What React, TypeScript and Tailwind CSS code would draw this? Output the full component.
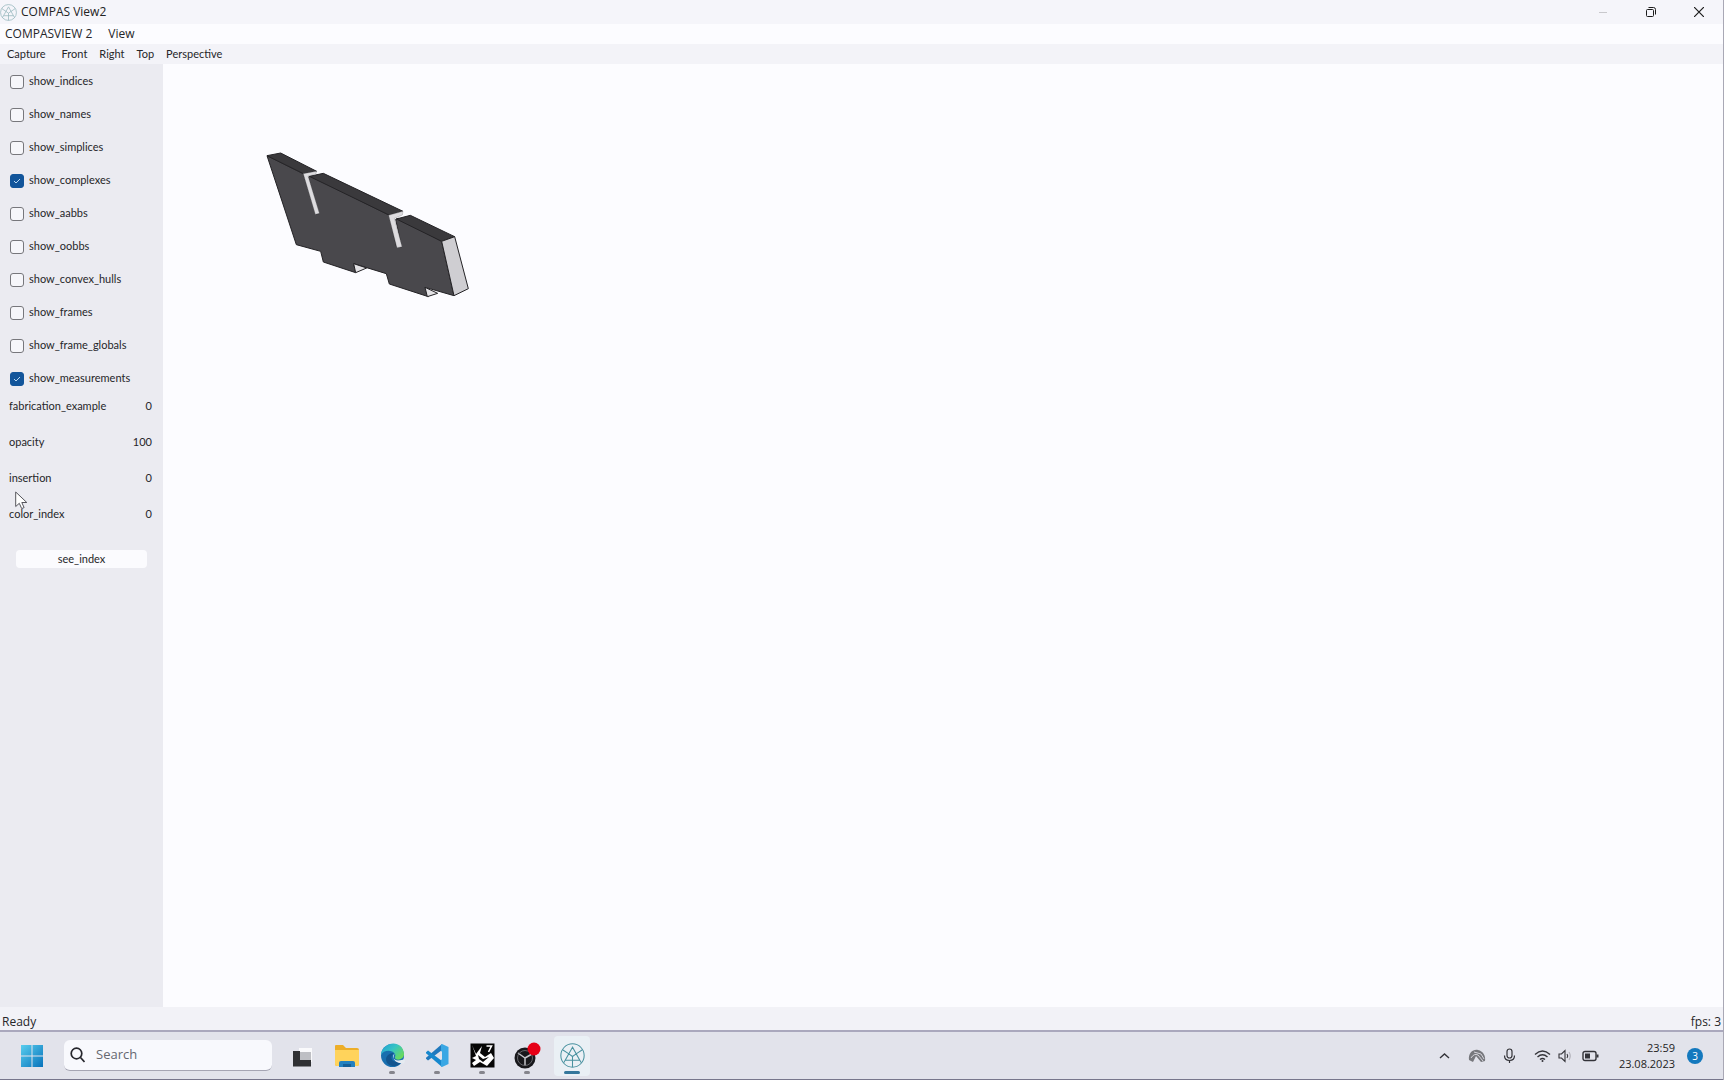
import React, { useState } from "react";

const toggles = [
  { name: "show_indices", on: false },
  { name: "show_names", on: false },
  { name: "show_simplices", on: false },
  { name: "show_complexes", on: true },
  { name: "show_aabbs", on: false },
  { name: "show_oobbs", on: false },
  { name: "show_convex_hulls", on: false },
  { name: "show_frames", on: false },
  { name: "show_frame_globals", on: false },
  { name: "show_measurements", on: true },
];

const values = [
  { name: "fabrication_example", value: 0 },
  { name: "opacity", value: 100 },
  { name: "insertion", value: 0 },
  { name: "color_index", value: 0 },
];

function CompasLogo({ className }: { className: string }) {
  return (
    <svg viewBox="0 0 24 24" className={className} fill="none" stroke="currentColor" aria-hidden="true">
      <circle cx="12" cy="12" r="11.2" />
      <path d="M12 4 5 16.500h14zM2.500 6.500l6 4M21.500 6.500l-6 4M5 16.500l-1.500 2.500M19 16.500l1.500 2.500M8.500 10.500 12 13l3.500-2.500M12 13v10" />
    </svg>
  );
}

function TitleBar() {
  return (
    <header className="flex h-6 shrink-0 items-center justify-between bg-[#f5f5fa]">
      <div className="flex items-center gap-1">
        <CompasLogo className="size-[17px] text-[#8fb3b8]" />
        <h1 className="text-xs text-[#222]">COMPAS View2</h1>
      </div>
      <div className="flex h-full items-center text-[#1c1c1c]">
        <button aria-label="Minimize" className="flex h-full w-12 items-center justify-center text-[#c8c8cc]">
          <svg width="10" height="10" stroke="currentColor"><path d="M1 5.500h8" /></svg>
        </button>
        <button aria-label="Restore" className="flex h-full w-12 items-center justify-center">
          <svg width="10" height="10" fill="none" stroke="currentColor">
            <rect x=".5" y="2.500" width="7" height="7" rx="1" />
            <path d="M2.500 .5h5q2 0 2 2v5" />
          </svg>
        </button>
        <button aria-label="Close" className="flex h-full w-12 items-center justify-center">
          <svg width="10" height="10" stroke="currentColor" strokeWidth="1.200"><path d="m0 0 10 10M10 0 0 10" /></svg>
        </button>
      </div>
    </header>
  );
}

function Sidebar() {
  const [state, setState] = useState(toggles);
  return (
    <aside className="relative w-[163px] shrink-0 bg-[#ebebf1] font-['Lato','Open_Sans',sans-serif] text-[11px]">
      <div className="pt-px">
        {state.map((t, i) => (
          <label key={t.name} className="flex h-[33px] items-center gap-[5px] pl-[10px]">
            <span className="grid size-[14px] place-items-center">
              <input
                type="checkbox"
                checked={t.on}
                onChange={() => setState(state.map((s, j) => (j === i ? { ...s, on: !s.on } : s)))}
                className="col-start-1 row-start-1 size-[14px] appearance-none rounded-[3px] border border-[#77777c] bg-[#f6f6fa] checked:border-[#12559b] checked:bg-[#12559b]"
              />
              {t.on && (
                <svg width="8" height="8" fill="none" stroke="#b9d8f2" className="pointer-events-none col-start-1 row-start-1">
                  <path d="m1 4 2 2 4-4" />
                </svg>
              )}
            </span>
            {t.name}
          </label>
        ))}
      </div>
      <dl>
        {values.map((v) => (
          <div key={v.name} className="flex h-9 items-start justify-between pt-[3px] pr-[11px] pl-[9px] leading-4">
            <dt>{v.name}</dt>
            <dd>{v.value}</dd>
          </div>
        ))}
      </dl>
      <div className="px-4 pt-[11px]">
        <button className="h-[18px] w-full rounded-sm bg-[#fbfbfe] leading-4">see_index</button>
      </div>
      <svg width="13" height="19" viewBox="0 0 13 19" className="absolute top-[427px] left-[15px]" aria-hidden="true">
        <path d="M.7 1v14.500l3.600-3.200 2.400 5.300 2.400-1-2.300-5.100h5z" fill="#fff" stroke="#55555c" />
      </svg>
    </aside>
  );
}

function Viewport() {
  return (
    <main className="min-w-0 flex-1 bg-[#fcfcff] pt-[76px] pl-[87px]">
      <svg width="230" height="170" viewBox="0 0 690 510" strokeLinejoin="round" role="img" aria-label="Timber plate with joints">
        <g stroke="#242326" strokeWidth="3">
          <path d="M51 47 160 101 197 222 207 221 175 111 184 108 417 225 440 322 455 321 437 238 445 235 575 304 612 467 525 442 535 470 418 432 409 401 311 371 317 398 220 366 212 334 139 314Z" fill="#49484c" />
          <path d="M51 47 92 39 200 94 160 101Z" fill="#3a393c" />
          <path d="M178 109 220 100 459 214 417 225Z" fill="#3a393c" />
          <path d="M439 237 481 226 614 290 575 304Z" fill="#3a393c" />
          <path d="M575 304 614 290 655 446 612 467Z" fill="#cfced2" />
          <path d="M311 371 350 384 317 398Z" fill="#e3e2e5" />
          <path d="M525 442 563 460 532 470Z" fill="#e3e2e5" />
        </g>
        <g fill="#dddcdf" stroke="#77767a">
          <path d="M160 101 200 94 197 103 174 108 208 220 196 223Z" />
          <path d="M416 226 459 214 457 225 433 235 456 320 441 323Z" />
        </g>
      </svg>
    </main>
  );
}

function TaskIcon({ label, running = false, active = false, children }: { label: string; running?: boolean; active?: boolean; children: React.ReactNode }) {
  return (
    <button
      aria-label={label}
      className={`relative flex h-10 w-9 items-center justify-center rounded ${active ? "bg-[#eaf0f5]" : ""}`}
    >
      {children}
      {(running || active) && (
        <span className={`absolute bottom-0.5 h-[3px] rounded-full ${active ? "w-4 bg-[#34779b]" : "w-1.5 bg-[#85858c]"}`} />
      )}
    </button>
  );
}

function Taskbar() {
  return (
    <footer className="flex h-[50px] shrink-0 items-center justify-between border-t-2 border-b border-t-[#aaa8bd] border-b-[#77768c] bg-[#e2e3eb]">
      <div className="flex items-center">
        <button aria-label="Start" className="ml-5 flex size-6 items-center justify-center">
          <svg width="24" height="24" viewBox="0 0 24 24">
            <defs>
              <linearGradient id="start" x1="0" y1="0" x2="1" y2="1">
                <stop offset="0" stopColor="#58cdee" />
                <stop offset="1" stopColor="#0873bb" />
              </linearGradient>
            </defs>
            <path fill="url(#start)" d="M1 1h10.500v10.500H1zM12.500 1H23v10.500H12.500zM1 12.500h10.500V23H1zM12.500 12.500H23V23H12.500z" />
          </svg>
        </button>
        <label className="ml-5 flex h-[31px] w-[208px] items-center gap-[11px] rounded-md border-b border-[#a5a5b3] bg-[#f8f9fd] pl-1.5">
          <svg width="15" height="16" viewBox="0 0 15 16" fill="none" stroke="#25262c" strokeWidth="1.700" aria-hidden="true">
            <circle cx="6.500" cy="6.500" r="5.300" />
            <path d="m10.500 10.500 4 4.500" />
          </svg>
          <input type="text" aria-label="Search" placeholder="Search" className="w-36 bg-transparent text-[13px] outline-none placeholder:text-[#666870]" />
        </label>
        <div className="ml-3 flex items-center gap-[9px]">
          <TaskIcon label="Task view">
            <svg width="22" height="22" viewBox="0 0 22 22">
              <path d="M8 3h13v14h-1V8H8z" fill="#fafafc" />
              <path d="M2 6h7v9h11v6.500H2z" fill="#2f3033" />
              <path d="M9 7h11v8H9z" fill="#bebfc4" />
            </svg>
          </TaskIcon>
          <TaskIcon label="File Explorer">
            <svg width="26" height="24" viewBox="0 0 26 24">
              <path d="M1 2q0-1 1-1h7l3 3h11q2 0 2 2v14q0 2-2 2H3q-2 0-2-2z" fill="#edae28" />
              <path d="M1 6h24v14q0 2-2 2H3q-2 0-2-2z" fill="#ffd35b" />
              <path d="M5 23v-4q0-2 2-2h12q2 0 2 2v4z" fill="#2381c0" />
              <path d="M9 20h8v3H9z" fill="#145f98" />
            </svg>
          </TaskIcon>
          <TaskIcon label="Edge" running>
            <svg width="25" height="25" viewBox="0 0 25 25">
              <defs>
                <linearGradient id="edge" x1="0" y1="0" x2="1" y2=".7">
                  <stop offset="0" stopColor="#209bd5" />
                  <stop offset=".5" stopColor="#36c3c4" />
                  <stop offset="1" stopColor="#6bdb59" />
                </linearGradient>
              </defs>
              <circle cx="12.500" cy="12.500" r="11.500" fill="#186faf" />
              <path d="M1 12C2-2 23-4 24 11c0 6-8 7-9 4-.5-1 1-2 0-4C12 6 3 7 1 12Z" fill="url(#edge)" />
              <path d="M14 10c-6 5-1 12 9 7-3 6-10 8-15 4-4-4-2-11 6-11Z" fill="#12558f" />
              <path d="M14.500 10.500c-3 3-1 7 3.500 7 3 0 4-1 6-1l1 1-1 3c-4 0-8-1-10-4-1-2 0-4 .5-6Z" fill="#e5ebf1" />
            </svg>
          </TaskIcon>
          <TaskIcon label="Visual Studio Code" running>
            <svg width="25" height="25" viewBox="0 0 25 25">
              <path d="M17 1v6L3 17.500 1 15.800v-1z" fill="#2079bd" />
              <path d="M17 24v-6L3 7.500 1 9.200v1z" fill="#1688ce" />
              <path d="m17 1 6.500 3v17L17 24l-1-1V2z" fill="#39a7e4" />
              <path d="M17 8v9l-6-4.500z" fill="#e2e3eb" />
            </svg>
          </TaskIcon>
          <TaskIcon label="Rhino 7" running>
            <svg width="25" height="25" viewBox="0 0 25 25">
              <path d="M.5.5h24v24H.5z" fill="#060606" />
              <path d="m2 2 4 9 6-8-2 7 5 4 6-4 3 5-7 8-7-4-6 4-2-3 4-3-4-2 4-2z" fill="#fff" />
              <path d="m8 12 5 4 6-2-6 5-4-3z" fill="#090909" />
              <path d="M16.500 3h5l-3 6" fill="none" stroke="#fff" strokeWidth="1.600" />
            </svg>
          </TaskIcon>
          <TaskIcon label="OBS Studio, recording" running>
            <svg width="28" height="28" viewBox="0 0 28 28">
              <circle cx="12" cy="16" r="10.500" fill="#18181b" />
              <path d="M12 16 5 11M12 16l7-4M12 16v8" fill="none" stroke="#c5c5ca" strokeWidth="1.500" />
              <circle cx="12" cy="16" r="7.500" fill="none" stroke="#66666b" />
              <circle cx="21" cy="7" r="6.500" fill="#e60016" />
            </svg>
          </TaskIcon>
          <TaskIcon label="COMPAS View2" active>
            <CompasLogo className="size-[25px] text-[#48919f]" />
          </TaskIcon>
        </div>
      </div>

      <div className="flex items-center text-[#333338]">
        <button aria-label="Show hidden icons" className="mr-[18px]">
          <svg width="11" height="8" fill="none" stroke="currentColor" strokeWidth="1.400"><path d="m1 6 4.500-4L10 6" /></svg>
        </button>
        <button aria-label="Background app" className="mr-[17px]">
          <svg width="18" height="14" viewBox="0 0 18 14">
            <path d="M1 11C0 4 5 0 10 1c5 1 8 6 7 11l-4 1-5-6-3 6z" fill="#77787d" />
            <path d="M3 9q3-5 7-3l5 6M6 3l7 2 3 5" stroke="#d5d5dc" fill="none" />
          </svg>
        </button>
        <button aria-label="Microphone" className="mr-[18px]">
          <svg width="13" height="16" viewBox="0 0 13 16" fill="none" stroke="currentColor" strokeWidth="1.200">
            <rect x="4" y="1" width="5" height="9" rx="2.500" />
            <path d="M1.500 7.500q0 5 5 5t5-5M6.500 12.500V15" />
          </svg>
        </button>
        <button aria-label="Network, volume and battery" className="mr-4 flex items-center gap-[7px]">
          <svg width="17" height="14" viewBox="0 0 17 14" fill="none" stroke="currentColor" strokeWidth="1.400">
            <path d="M1 5.500q7.500-7 15 0M3.500 8q5-4.500 10 0M6 10.500q2.500-2 5 0" />
            <circle cx="8.500" cy="12" r="1" fill="currentColor" stroke="none" />
          </svg>
          <svg width="13" height="14" viewBox="0 0 13 14" fill="none" stroke="currentColor" strokeWidth="1.100">
            <path d="M1 5h2.500L7 1.500v11L3.500 9H1zM9 5q1.500 2 0 4" />
            <path d="M11 3q2.500 4 0 8" stroke="#b0b0b8" />
          </svg>
          <svg width="17" height="12" viewBox="0 0 17 12" className="ml-1" fill="none" stroke="currentColor" strokeWidth="1.400">
            <rect x="1" y="1.500" width="13" height="9" rx="2" />
            <path d="M3 3.500h5v5H3z" fill="currentColor" stroke="none" />
            <path d="M15.500 4.500v3" strokeWidth="2" />
          </svg>
        </button>
        <time className="mr-3 w-[60px] text-right text-[11px] leading-4 text-[#222]">
          23:59
          <br />
          23.08.2023
        </time>
        <button aria-label="3 notifications" className="mr-5 flex size-4 items-center justify-center rounded-full bg-[#1479be] text-[10px] leading-none text-white">
          3
        </button>
      </div>
    </footer>
  );
}

export default function App() {
  return (
    <div className="flex h-screen flex-col overflow-hidden border-r border-[#a9a8b5] bg-[#f2f2f7] font-['Open_Sans','Noto_Sans',sans-serif] text-[#262629]">
      <TitleBar />
      <nav className="flex h-5 shrink-0 items-center gap-4 bg-[#fcfcff] pl-[5px] text-xs">
        <button>COMPASVIEW 2</button>
        <button>View</button>
      </nav>
      <div role="toolbar" className="flex h-5 shrink-0 items-center gap-3 bg-[#f3f3f8] pl-[7px] font-['Lato','Open_Sans',sans-serif] text-[11px]">
        <button className="mr-1">Capture</button>
        <button>Front</button>
        <button>Right</button>
        <button>Top</button>
        <button>Perspective</button>
      </div>
      <div className="flex min-h-0 flex-1">
        <Sidebar />
        <Viewport />
      </div>
      <div role="status" className="flex h-[23px] shrink-0 items-end justify-between bg-[#f2f2f7] px-[2px] text-xs">
        <span>Ready</span>
        <span>fps: 3</span>
      </div>
      <Taskbar />
    </div>
  );
}
